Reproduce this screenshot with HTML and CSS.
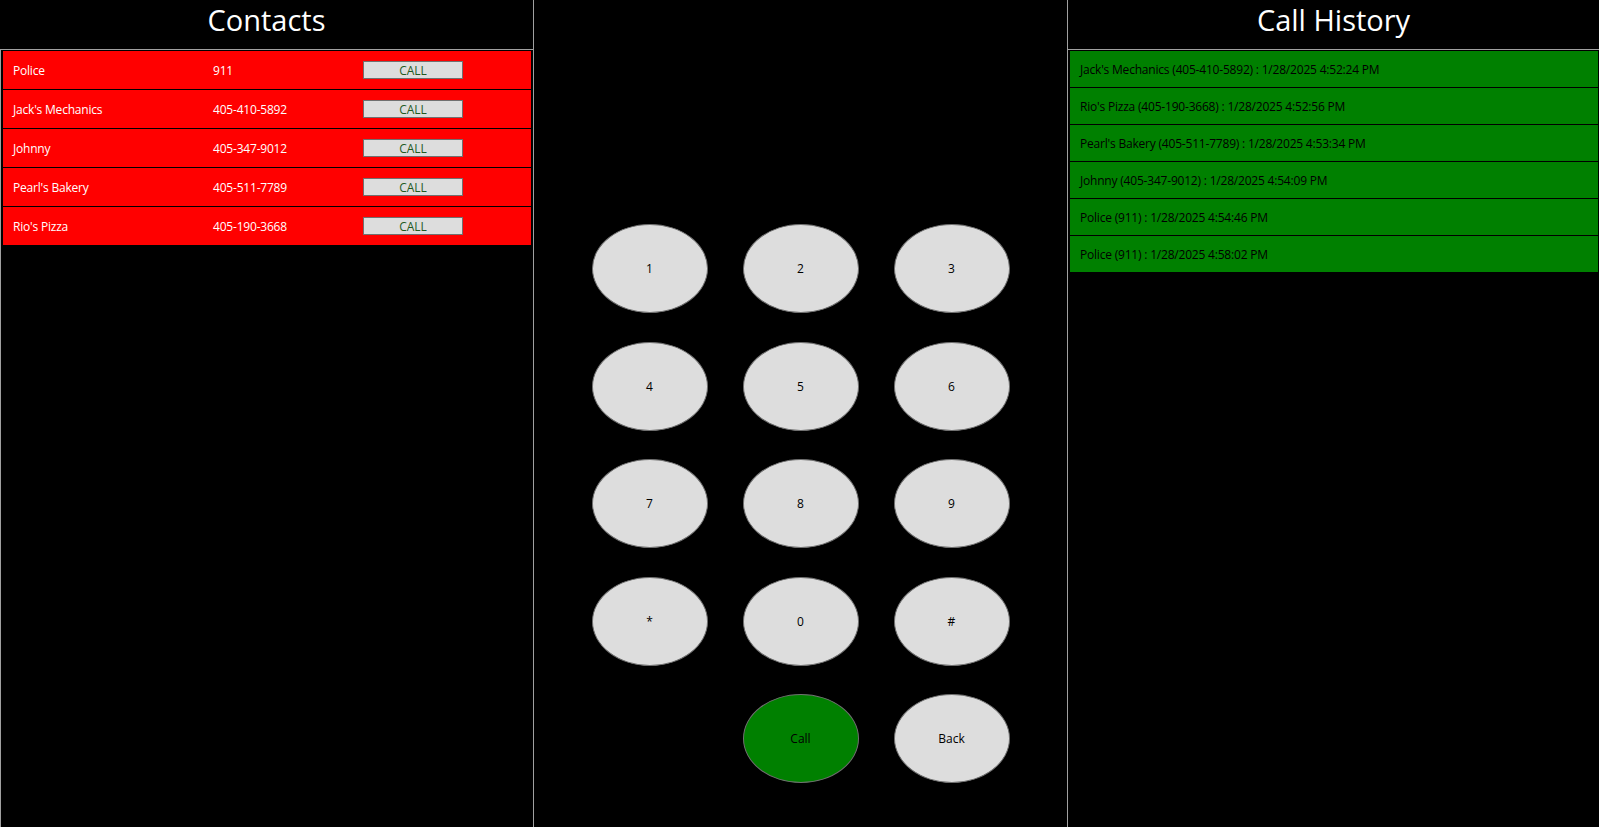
FILE: index.html
```html
<!DOCTYPE html>
<html lang="en">
<head>
    <meta charset="UTF-8">
    <meta name="viewport" content="width=device-width, initial-scale=1.0">
    <title>Phone</title>
<link rel="stylesheet" href="styles.css">
</head>
<body>
    <div class="app">
        <!-- Contacts -->
        <section class="panel">
            <h1 class="title">Contacts</h1>
            <div class="list contacts-list">
                <div class="contact-row">
                    <span class="contact-name">Police</span>
                    <span class="contact-phone">911</span>
                    <button class="call-btn">CALL</button>
                </div>
                <div class="contact-row">
                    <span class="contact-name">Jack's Mechanics</span>
                    <span class="contact-phone">405-410-5892</span>
                    <button class="call-btn">CALL</button>
                </div>
                <div class="contact-row">
                    <span class="contact-name">Johnny</span>
                    <span class="contact-phone">405-347-9012</span>
                    <button class="call-btn">CALL</button>
                </div>
                <div class="contact-row">
                    <span class="contact-name">Pearl's Bakery</span>
                    <span class="contact-phone">405-511-7789</span>
                    <button class="call-btn">CALL</button>
                </div>
                <div class="contact-row">
                    <span class="contact-name">Rio's Pizza</span>
                    <span class="contact-phone">405-190-3668</span>
                    <button class="call-btn">CALL</button>
                </div>
            </div>
        </section>

        <!-- Dial pad -->
        <section class="panel dialer">
            <div class="keypad">
                <button class="key">1</button>
                <button class="key">2</button>
                <button class="key">3</button>
                <button class="key">4</button>
                <button class="key">5</button>
                <button class="key">6</button>
                <button class="key">7</button>
                <button class="key">8</button>
                <button class="key">9</button>
                <button class="key">*</button>
                <button class="key">0</button>
                <button class="key">#</button>
                <span></span>
                <button class="key key-call">Call</button>
                <button class="key">Back</button>
            </div>
        </section>

        <!-- Call history -->
        <section class="panel">
            <h1 class="title">Call History</h1>
            <div class="list history-list">
                <div class="history-row">Jack's Mechanics (405-410-5892) : 1/28/2025 4:52:24 PM</div>
                <div class="history-row">Rio's Pizza (405-190-3668) : 1/28/2025 4:52:56 PM</div>
                <div class="history-row">Pearl's Bakery (405-511-7789) : 1/28/2025 4:53:34 PM</div>
                <div class="history-row">Johnny (405-347-9012) : 1/28/2025 4:54:09 PM</div>
                <div class="history-row">Police (911) : 1/28/2025 4:54:46 PM</div>
                <div class="history-row">Police (911) : 1/28/2025 4:58:02 PM</div>
            </div>
        </section>
    </div>
</body>
</html>
```

FILE: styles.css
```css
body {
    margin: 0;
    background: #000;
    font-family: 'Open Sans', sans-serif;
    font-size: 12px;
    overflow: hidden;
}
.app {
    display: grid;
    grid-template-columns: 533px 535px 531px;
    height: 827px;
}
.panel {
    display: flex;
    flex-direction: column;
    min-height: 0;
}
.title {
    margin: 0;
    height: 49px;
    line-height: 40px;
    font-size: 29px;
    font-weight: normal;
    color: white;
    text-align: center;
}
.list {
    flex: 1;
    border-top: 1px solid #a0a0a0;
}
.contacts-list {
    border-left: 1px solid #a0a0a0;
    padding: 0 1px;
}
.history-list {
    padding-left: 1px;
}
.contact-row, .history-row {
    border: 1px solid #000;
    display: flex;
    align-items: center;
    padding-left: 10px;
    letter-spacing: -0.2px;
}
.contact-row + .contact-row, .history-row + .history-row {
    border-top: none;
}
.contact-row {
    height: 38px;
    background: #ff0000;
    color: white;
}
.contact-name {
    width: 200px;
}
.contact-phone {
    width: 150px;
}
.call-btn {
    width: 100px;
    height: 18px;
    padding: 0;
    border: 1px solid #707070;
    background: #dddddd;
    color: #1f5a1f;
    font-family: inherit;
    font-size: 12px;
    line-height: 17px;
}
.history-row {
    height: 36px;
    background: #008000;
    color: #000;
}
.dialer {
    border-left: 1px solid #a0a0a0;
    border-right: 1px solid #a0a0a0;
}
.keypad {
    display: grid;
    grid-template-columns: repeat(3, 116px);
    grid-auto-rows: 89px;
    column-gap: 35px;
    row-gap: 28.5px;
    justify-content: center;
    padding-top: 224px;
}
.key {
    border: 1px solid #707070;
    border-radius: 50%;
    background: #dddddd;
    color: #000;
    font-family: inherit;
    font-size: 12px;
    padding: 0;
}
.key-call {
    background: #008000;
}
```
